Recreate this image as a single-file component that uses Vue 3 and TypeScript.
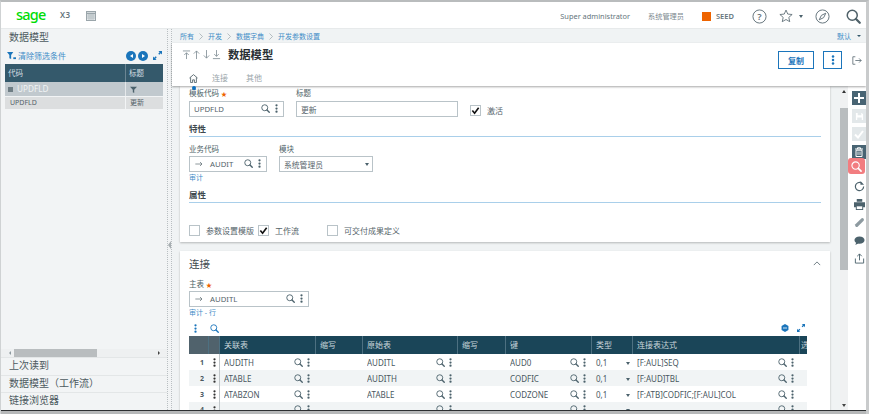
<script setup lang="ts">
const columns: { label: string; width: number }[] = [
  { label: '', width: 20 },
  { label: '', width: 11 },
  { label: '关联表', width: 96 },
  { label: '缩写', width: 47 },
  { label: '原始表', width: 95 },
  { label: '缩写', width: 48 },
  { label: '键', width: 86 },
  { label: '类型', width: 41 },
  { label: '连接表达式', width: 167 },
  { label: '选', width: 7 },
]
const rows = [
  { n: '1', a: 'AUDITH', b: 'AUDITL', k: 'AUD0', t: '0,1', e: '[F:AUL]SEQ' },
  { n: '2', a: 'ATABLE', b: 'AUDITH', k: 'CODFIC', t: '0,1', e: '[F:AUD]TBL' },
  { n: '3', a: 'ATABZON', b: 'ATABLE', k: 'CODZONE', t: '0,1', e: '[F:ATB]CODFIC;[F:AUL]COL' },
  { n: '4', a: '', b: '', k: '', t: '', e: '' },
]
const crumbs = ['所有', '开发', '数据字典', '开发参数设置']
const gridColumns = columns.map((c) => c.width + 'px').join(' ')
</script>

<template>
  <div class="frame">
    <svg class="defs" width="0" height="0" aria-hidden="true">
      <symbol id="i-search" viewBox="0 0 12 12">
        <circle cx="5" cy="5" r="4" fill="none" stroke="currentColor" stroke-width="1.200" />
        <path d="M8 8l3 3" stroke="currentColor" stroke-width="1.800" stroke-linecap="round" />
      </symbol>
      <symbol id="i-dots" viewBox="0 0 4 12">
        <circle cx="2" cy="1.800" r="1.500" fill="currentColor" />
        <circle cx="2" cy="6" r="1.500" fill="currentColor" />
        <circle cx="2" cy="10.200" r="1.500" fill="currentColor" />
      </symbol>
      <symbol id="i-expand" viewBox="0 0 10 10">
        <path d="M6 0h4v4L8.600 2.600 7 4.200 5.800 3 7.400 1.400zM4 10H0V6l1.400 1.400L3 5.800 4.200 7 2.600 8.600z" fill="currentColor" />
      </symbol>
      <symbol id="i-arrow" viewBox="0 0 12 8">
        <path d="M0.500 4h10M7.500 1l3 3-3 3" fill="none" stroke="currentColor" stroke-width="1" />
      </symbol>
    </svg>

    <header class="topbar">
      <div class="brand">sage</div>
      <div class="product">X3</div>
      <svg class="calendar" viewBox="0 0 10 10" width="10" height="10">
        <rect x="0.500" y="0.500" width="9" height="9" fill="#e4e8ea" stroke="#9aa5aa" />
        <path d="M0 2.500h10" stroke="#9aa5aa" stroke-width="1.500" />
        <path d="M3 3v7M5 3v7M7 3v7M0 5h10M0 7h10" stroke="#9aa5aa" stroke-width="0.500" />
      </svg>
      <div class="top-right">
        <span class="user">Super administrator</span>
        <span class="role">系统管理员</span>
        <span class="seed-box"></span>
        <span class="seed">SEED</span>
        <svg class="t-help" viewBox="0 0 16 16" width="15" height="15">
          <circle cx="8" cy="8" r="7" fill="none" stroke="#5f6f77" stroke-width="1" />
          <text x="8" y="11.600" text-anchor="middle" class="help-q">?</text>
        </svg>
        <svg class="t-star" viewBox="0 0 16 16" width="14" height="14">
          <path d="M8 1.200l2 4.600 5 .5-3.800 3.300 1.100 4.900L8 12l-4.300 2.500 1.100-4.900L1 6.300l5-.5z" fill="none" stroke="#5f6f77" stroke-width="1" />
        </svg>
        <span class="t-caret"></span>
        <svg class="t-compass" viewBox="0 0 16 16" width="15" height="15">
          <circle cx="8" cy="8" r="7" fill="none" stroke="#5f6f77" stroke-width="1" />
          <path d="M11.500 4.500L9.200 9.200 4.500 11.500 6.800 6.800z" fill="none" stroke="#5f6f77" stroke-width="1" />
        </svg>
        <svg class="t-search" width="15" height="15"><use href="#i-search" /></svg>
      </div>
    </header>

    <div class="body">
      <aside class="left">
        <div class="left-title">数据模型</div>
        <div class="filter-row">
          <svg class="funnel" viewBox="0 0 10 10" width="9" height="9">
            <path d="M0 1h7L4.600 4.500V9L2.600 8V4.500z" fill="#1b75bb" />
            <path d="M7 7h3v2H7z" fill="#1b75bb" />
          </svg>
          <span class="filter-link">清除筛选条件</span>
          <span class="nav-btn"><i class="tri-l"></i></span>
          <span class="nav-btn"><i class="tri-r"></i></span>
          <svg class="expand" width="9" height="9"><use href="#i-expand" /></svg>
        </div>
        <div class="left-table">
          <div class="left-head">
            <span class="lh-a">代码</span><span class="lh-b">标题</span>
          </div>
          <div class="left-filter">
            <span class="lf-a"><i class="lf-icon"></i>UPDFLD</span>
            <span class="lf-b">
              <svg viewBox="0 0 10 10" width="7" height="7"><path d="M0 1h10L6 5.500V10L4 9V5.500z" fill="#4c626c" /></svg>
            </span>
          </div>
          <div class="left-row">
            <span class="lr-a">UPDFLD</span><span class="lr-b">更新</span>
          </div>
        </div>
        <div class="left-spacer"></div>
        <div class="left-scroll">
          <i class="ls-l"></i>
          <span class="ls-track"><span class="ls-thumb"></span></span>
          <i class="ls-r"></i>
        </div>
        <div class="left-link">上次读到</div>
        <div class="left-link">数据模型（工作流）</div>
        <div class="left-link">链接浏览器</div>
      </aside>

      <div class="splitter"><i class="split-tri"></i></div>

      <main class="right">
        <div class="crumbs">
          <template v-for="(c, i) in crumbs" :key="c">
            <svg v-if="i > 0" class="crumb-sep" viewBox="0 0 4 7" width="4" height="7"><path d="M.5.5l3 3-3 3" fill="none" stroke="#99a5aa" stroke-width="0.700" /></svg>
            <span class="crumb">{{ c }}</span>
          </template>
          <span class="default-view">默认</span>
          <i class="default-caret"></i>
        </div>

        <div class="title-panel">
          <div class="title-row">
            <div class="arrows">
              <svg v-for="d in ['M1 1h8M5 10V3M2.500 5.500L5 3l2.500 2.500', 'M5 10V1M2 4l3-3 3 3', 'M5 0v9M2 6l3 3 3-3', 'M5 0v7M2.500 4.500L5 7l2.500-2.500M1 9.500h8']" :key="d" viewBox="0 0 10 11" width="9" height="10">
                <path :d="d" fill="none" stroke="#7d8b92" stroke-width="0.900" />
              </svg>
            </div>
            <h1 class="page-title">数据模型</h1>
            <div class="title-actions">
              <button class="btn-copy">复制</button>
              <button class="btn-more"><svg width="4" height="10"><use href="#i-dots" /></svg></button>
              <svg class="exit" viewBox="0 0 12 10" width="10" height="9">
                <path d="M4 .5H1v9h3M4 5h7M8.500 2.500L11 5 8.500 7.500" fill="none" stroke="#5f6f77" stroke-width="1" />
              </svg>
            </div>
          </div>
          <nav class="tabs">
            <span class="tab tab-home">
              <svg viewBox="0 0 10 10" width="9" height="9">
                <path d="M.5 4.500L5 .7l4.500 3.800M1.800 3.800v5.700h2.200V6.500h2v3h2.200V3.800" fill="none" stroke="#46585f" stroke-width="0.900" />
              </svg>
              <i class="tab-dot"></i>
            </span>
            <span class="tab">连接</span>
            <span class="tab">其他</span>
          </nav>
        </div>

        <div class="work">
          <div class="scroller">
            <section class="card card-main">
              <div class="row-top">
                <div class="field">
                  <label class="lbl">模板代码 <b class="req">★</b></label>
                  <div class="input w-code">
                    <span class="val">UPDFLD</span>
                    <svg class="ic-s"><use href="#i-search" /></svg>
                    <svg class="ic-d"><use href="#i-dots" /></svg>
                  </div>
                </div>
                <div class="field">
                  <label class="lbl">标题</label>
                  <div class="input w-title"><span class="val">更新</span></div>
                </div>
                <div class="check-top">
                  <span class="cb cb-on"><svg viewBox="0 0 10 10"><path d="M1.500 5l2.500 3 4.500-6" fill="none" stroke="#111" stroke-width="1.800" /></svg></span>
                  <span class="cb-label">激活</span>
                </div>
              </div>

              <div class="section-head">特性</div>
              <div class="row-fields">
                <div class="field">
                  <label class="lbl">业务代码</label>
                  <div class="input w-biz">
                    <svg class="ic-a"><use href="#i-arrow" /></svg>
                    <span class="val val-link">AUDIT</span>
                    <svg class="ic-s"><use href="#i-search" /></svg>
                    <svg class="ic-d"><use href="#i-dots" /></svg>
                  </div>
                  <span class="sub-link">审计</span>
                </div>
                <div class="field">
                  <label class="lbl">模块</label>
                  <div class="input w-mod">
                    <span class="val">系统管理员</span>
                    <i class="sel-caret"></i>
                  </div>
                </div>
              </div>

              <div class="section-head sh2">属性</div>
              <div class="checks">
                <span class="cb"></span><span class="cb-label c1">参数设置模版</span>
                <span class="cb cb-on"><svg viewBox="0 0 10 10"><path d="M1.500 5l2.500 3 4.500-6" fill="none" stroke="#111" stroke-width="1.800" /></svg></span><span class="cb-label c2">工作流</span>
                <span class="cb"></span><span class="cb-label">可交付成果定义</span>
              </div>
            </section>

            <section class="card card-join">
              <div class="join-head">
                <h2 class="join-title">连接</h2>
                <svg viewBox="0 0 10 6" width="8" height="5"><path d="M1 5l4-4 4 4" fill="none" stroke="#5f6f77" stroke-width="1.100" /></svg>
              </div>
              <label class="lbl">主表 <b class="req">★</b></label>
              <div class="input w-main">
                <svg class="ic-a"><use href="#i-arrow" /></svg>
                <span class="val val-link">AUDITL</span>
                <svg class="ic-s"><use href="#i-search" /></svg>
                <svg class="ic-d"><use href="#i-dots" /></svg>
              </div>
              <span class="sub-link">审计 - 行</span>

              <div class="tbl-tools">
                <svg class="tool-d"><use href="#i-dots" /></svg>
                <svg class="tool-s"><use href="#i-search" /></svg>
                <span class="tool-gap"></span>
                <svg class="tool-hex" viewBox="0 0 10 10"><path d="M5 0l4.300 2.500v5L5 10 .7 7.500v-5z" fill="#1b75bb" /><path d="M2.500 5h5" stroke="#fff" stroke-width="1" /></svg>
                <svg class="tool-e"><use href="#i-expand" /></svg>
              </div>

              <div class="tbl">
                <div class="tr thead" :style="{ gridTemplateColumns: gridColumns }">
                  <span v-for="(c, i) in columns" :key="i" class="th" :class="{ 'th-gray': i < 2 }">{{ c.label }}</span>
                </div>
                <div v-for="(r, i) in rows" :key="r.n" class="tr" :class="{ alt: i % 2 === 1 }" :style="{ gridTemplateColumns: gridColumns }">
                  <span class="td td-n">{{ r.n }}</span>
                  <span class="td td-m"><svg class="ic-d"><use href="#i-dots" /></svg></span>
                  <span class="td td-i"><span>{{ r.a }}</span><svg class="ic-s"><use href="#i-search" /></svg><svg class="ic-d"><use href="#i-dots" /></svg></span>
                  <span class="td"></span>
                  <span class="td td-i"><span>{{ r.b }}</span><svg class="ic-s"><use href="#i-search" /></svg><svg class="ic-d"><use href="#i-dots" /></svg></span>
                  <span class="td"></span>
                  <span class="td td-i"><span>{{ r.k }}</span><svg class="ic-s"><use href="#i-search" /></svg><svg class="ic-d"><use href="#i-dots" /></svg></span>
                  <span class="td td-t"><span>{{ r.t }}</span><i class="sel-caret"></i></span>
                  <span class="td td-i"><span>{{ r.e }}</span><svg class="ic-s"><use href="#i-search" /></svg><svg class="ic-d"><use href="#i-dots" /></svg></span>
                  <span class="td"></span>
                </div>
              </div>
            </section>
          </div>

          <div class="vscroll">
            <i class="vs-up"></i>
            <span class="vs-thumb"></span>
            <span class="vs-fill"></span>
            <i class="vs-down"></i>
          </div>

          <div class="rail">
            <span class="r-btn r-dark"><svg viewBox="0 0 10 10" width="10" height="10"><path d="M5 0v10M0 5h10" stroke="#fff" stroke-width="2" /></svg></span>
            <span class="r-btn r-off"><svg viewBox="0 0 10 10" width="9" height="9"><path d="M1 1h6.500L9 2.500V9H1z" fill="#fff" /><path d="M3 1h4v2.500H3zM2.500 6h5v3h-5z" fill="#e4e9eb" /></svg></span>
            <span class="r-btn r-off"><svg viewBox="0 0 10 10" width="10" height="10"><path d="M1 5.500L4 8.500 9 2" fill="none" stroke="#fff" stroke-width="2" /></svg></span>
            <span class="r-btn r-dark"><svg viewBox="0 0 10 10" width="10" height="10"><path d="M1 2h8M3.500 2V.8h3V2M2 3.200h6V9.500H2z" fill="none" stroke="#fff" stroke-width="1" /><path d="M4 4.500v3.500M6 4.500v3.500" stroke="#fff" stroke-width="0.800" /></svg></span>
            <span class="r-find"><svg viewBox="0 0 12 12" width="11" height="11" class="find-svg"><use href="#i-search" /></svg></span>
            <svg class="r-ic r-first" viewBox="0 0 12 12" width="11" height="11"><path d="M10.500 6A4.500 4.500 0 1 1 8 2" fill="none" stroke="#4c626c" stroke-width="1.300" /><path d="M7 0v4h4z" fill="#4c626c" /></svg>
            <svg class="r-ic" viewBox="0 0 12 12" width="11" height="11"><path d="M3 0h6v3H3zM0 3.500h12V9H10v3H2V9H0z" fill="#4c626c" /><path d="M3 8h6v3H3z" fill="#fff" /></svg>
            <svg class="r-ic" viewBox="0 0 12 12" width="11" height="11"><path d="M1.500 8L8 1.500a1.800 1.800 0 0 1 2.500 2.500L4 10.500A1.800 1.800 0 0 1 1.500 8z" fill="#8d9aa0" /></svg>
            <svg class="r-ic" viewBox="0 0 12 12" width="11" height="11"><ellipse cx="6" cy="5.500" rx="5.500" ry="4" fill="#4c626c" /><path d="M2.500 8L1.500 11 5 9z" fill="#4c626c" /></svg>
            <svg class="r-ic" viewBox="0 0 12 12" width="11" height="11"><path d="M1.500 6v5h9V6M6 8V1M3.500 3.500L6 1l2.500 2.500" fill="none" stroke="#4c626c" stroke-width="1" /></svg>
          </div>
        </div>
      </main>
    </div>
    <div class="bottom-edge"></div>
  </div>
</template>

<style>
html, body { margin: 0; padding: 0; background: #fff; overflow: hidden; }
</style>

<style scoped>
.frame {
  width: 869px; height: 414px; box-sizing: border-box; overflow: hidden;
  display: flex; flex-direction: column; position: relative;
  border-top: 2px solid #b9bcbd; border-left: 1px solid #cfd2d3; border-right: 3px solid #c9cbcc;
  font-family: "Noto Sans", "Noto Sans CJK SC", sans-serif; color: #4d5f67; background: #fff;
}
.defs { position: absolute; }
svg { display: block; flex: none; }
i { display: block; flex: none; }

.topbar { height: 26px; display: flex; align-items: center; flex: none; background: #fff; padding-top: 1px; box-sizing: border-box; }
.brand { margin-left: 15px; width: 36px; color: #00dc06; font: 500 14.500px/14px "Noto Sans", sans-serif; letter-spacing: -0.800px; margin-top: -3px; }
.product { margin-left: 8px; font-size: 8px; font-weight: 600; color: #65757c; letter-spacing: 0.300px; margin-top: -2px; }
.calendar { margin-left: 16px; }
.top-right { margin-left: auto; display: flex; align-items: center; height: 100%; padding-top: 1px; box-sizing: border-box; }
.user { font-size: 7.400px; color: #65757c; margin-right: 18px; }
.role { font-size: 7.200px; color: #7b888e; margin-right: 18px; }
.seed-box { width: 9px; height: 9px; background: #ee6400; margin-right: 5px; }
.seed { font-size: 7.500px; color: #65757c; font-weight: 600; margin-right: 18px; }
.help-q { font: 600 10px "Noto Sans", sans-serif; fill: #5f6f77; }
.t-help { margin-right: 12px; }
.t-star { margin-right: 6px; }
.t-caret { width: 0; height: 0; border: 2.500px solid transparent; border-top: 3px solid #4c626c; margin: 3px 12px 0 0; }
.t-compass { margin-right: 16px; }
.t-search { color: #4f6169; margin-right: 5px; }

.body { flex: 1; min-height: 0; display: flex; border-top: 1px solid #e7eaeb; }

.left { width: 166px; flex: none; background: #f2f4f5; display: flex; flex-direction: column; box-sizing: border-box; }
.left-title { font-size: 10px; line-height: 14px; height: 16px; padding: 1px 0 0 8px; color: #4d5a60; flex: none; }
.filter-row { display: flex; align-items: center; height: 17px; margin-top: 1px; padding-left: 6px; padding-right: 5px; flex: none; }
.funnel { margin-right: 2px; }
.filter-link { font-size: 8px; color: #3f8cc7; flex: 1; }
.nav-btn { width: 10px; height: 10px; border-radius: 50%; background: #1b75bb; display: flex; align-items: center; justify-content: center; margin-right: 2px; }
.tri-l { border: 2.500px solid transparent; border-right: 3px solid #fff; border-left: 0; }
.tri-r { border: 2.500px solid transparent; border-left: 3px solid #fff; border-right: 0; }
.expand { color: #1b75bb; margin-left: 3px; }
.left-table { margin: 0 4px; flex: none; }
.left-head { height: 18px; display: flex; background: #34596b; color: #d3dde1; font-size: 7.500px; line-height: 18px; }
.lh-a { width: 121px; padding-left: 3px; box-sizing: border-box; border-right: 1px solid #6b8593; }
.lh-b { padding-left: 3px; }
.left-filter { height: 14px; display: flex; background: #c1c9ce; border-bottom: 1px solid #f2f4f5; color: #f0f3f4; font-size: 8.200px; line-height: 14px; }
.lf-a { width: 121px; display: flex; align-items: center; padding-left: 3px; box-sizing: border-box; border-right: 1px solid #e5e8ea; }
.lf-icon { width: 5px; height: 5px; background: #6e7d84; margin-right: 4px; }
.lf-b { display: flex; align-items: center; padding-left: 4px; }
.left-row { height: 12px; display: flex; background: #dcdedf; font-size: 7px; line-height: 12px; color: #55636a; }
.lr-a { width: 121px; padding-left: 5px; box-sizing: border-box; border-right: 1px solid #f2f4f5; }
.lr-b { padding-left: 4px; }
.left-spacer { flex: 1; }
.left-scroll { height: 8px; display: flex; align-items: center; background: #eef0f1; flex: none; }
.ls-l { border: 2px solid transparent; border-right: 2px solid #8d9aa0; border-left: 0; margin-left: 8px; }
.ls-track { flex: 1; margin-left: 3px; }
.ls-thumb { display: block; width: 83px; height: 8px; background: #b9bdbf; }
.ls-r { border: 2px solid transparent; border-left: 2px solid #444; border-right: 0; margin-right: 7px; }
.left-link { height: 17.670px; line-height: 15px; font-size: 10px; color: #4d5a60; padding-left: 8px; border-top: 1px solid #e3e6e7; flex: none; box-sizing: border-box; }

.splitter { width: 5px; flex: none; background: #f2f4f5; border-left: 1px dotted #b9bfc2; border-right: 1px dotted #b9bfc2; box-sizing: border-box; display: flex; align-items: center; }
.split-tri { border: 4px solid transparent; border-right: 3px solid #a7aeb1; border-left: 0; margin-top: 50px; }

.right { flex: 1; min-width: 0; display: flex; flex-direction: column; background: #f0f3f4; }
.crumbs { height: 14px; flex: none; display: flex; align-items: center; padding-left: 8px; padding-right: 5px; font-size: 7px; }
.crumb { color: #3f8cc7; }
.crumb-sep { margin: 0 5px; }
.default-view { margin-left: auto; color: #3f8cc7; font-size: 7px; }
.default-caret { border: 2px solid transparent; border-top: 2.500px solid #34596b; margin: 2px 0 0 6px; }

.title-panel { height: 43px; flex: none; background: #fff; box-shadow: 0 1px 2px rgba(0,0,0,.35); position: relative; z-index: 2; }
.title-row { height: 24px; display: flex; align-items: center; padding-left: 10px; }
.arrows { display: flex; gap: 1px; }
.page-title { font-size: 11.300px; font-weight: 600; color: #2a3034; margin: 0 0 0 7px; line-height: 14px; }
.title-actions { margin-left: auto; display: flex; align-items: center; margin-right: 4px; margin-top: 10px; }
.btn-copy { width: 36px; height: 18px; border: 1px solid #1b75bb; background: #fff; color: #1b75bb; font: 600 8px "Noto Sans CJK SC", sans-serif; padding: 0; box-sizing: border-box; margin-right: 9px; }
.btn-more { width: 19px; height: 18px; border: 1px solid #1b75bb; background: #fff; color: #1b75bb; padding: 0; display: flex; align-items: center; justify-content: center; box-sizing: border-box; margin-right: 10px; }
.tabs { display: flex; height: 19px; padding: 3px 0 0 17px; box-sizing: border-box; align-items: center; }
.tab { font-size: 8px; color: #9aa5aa; margin-right: 18px; line-height: 14px; }
.tab-home { position: relative; margin-right: 14px; }
.tab-dot { position: absolute; left: 2.500px; top: 12px; width: 4px; height: 4px; border-radius: 50%; background: #0b6fc1; }

.work { flex: 1; min-height: 0; display: flex; }
.scroller { flex: 1; min-width: 0; padding: 0 10px 0 8px; overflow: hidden; }
.card { background: #fff; box-shadow: 0 1px 2px rgba(0,0,0,.25); padding-left: 9px; box-sizing: border-box; }
.card-main { height: 156px; padding-top: 2px; padding-right: 9px; }
.card-join { margin-top: 9px; height: 180px; overflow: hidden; padding-top: 1px; }
.row-top { display: flex; align-items: flex-start; }
.field { display: flex; flex-direction: column; margin-right: 12px; }
.lbl { display: block; font-size: 7.500px; line-height: 11px; color: #4d5f67; height: 11px; }
.req { color: #ee6400; font-weight: 400; font-size: 6px; }
.input { height: 16px; box-sizing: border-box; border: 1px solid #b9c3c8; margin-top: 1px; display: flex; align-items: center; padding-left: 4px; padding-right: 5px; background: #fff; }
.row-top .input { margin-top: 2px; }
.w-code { width: 95px; }
.w-title { width: 162px; }
.w-biz { width: 78px; }
.w-mod { width: 94px; padding-right: 3px; }
.w-main { width: 120px; }
.val { font-size: 7.800px; color: #55636a; flex: 1; }
.val-link { margin-left: 7px; }
.ic-s { width: 9px; height: 9px; color: #4c626c; margin-left: 3px; margin-top: -1px; }
.ic-d { width: 3px; height: 9px; color: #4c626c; margin-left: 5px; margin-top: -1px; }
.ic-a { width: 8px; height: 6px; color: #55636a; margin-left: 1px; }
.check-top { display: flex; align-items: center; margin-top: 17px; }
.cb { width: 11px; height: 11px; border: 1px solid #b9c3c8; box-sizing: border-box; display: flex; align-items: center; justify-content: center; flex: none; }
.cb svg { width: 9px; height: 9px; }
.cb-label { font-size: 8px; margin-left: 6px; color: #55636a; }
.section-head { font-size: 8.500px; font-weight: 600; color: #40494e; line-height: 11px; margin-top: 6px; padding-bottom: 2px; border-bottom: 1px solid #a9cfea; height: 11px; }
.sh2 { margin-top: 6px; }
.row-fields { display: flex; margin-top: 7px; }
.sub-link { display: block; font-size: 7px; line-height: 10px; color: #3f8cc7; margin-top: 1px; }
.sel-caret { border: 2.500px solid transparent; border-top: 3px solid #4c626c; margin: 3px 0 0 auto; }
.checks { display: flex; align-items: center; margin-top: 22px; }
.c1 { margin-right: 4px; }
.c2 { margin-right: 28px; }

.join-head { display: flex; align-items: center; justify-content: space-between; height: 20px; margin-top: 1px; padding-right: 9px; }
.join-title { font-size: 10.500px; font-weight: 400; color: #40494e; margin: 0; }
.card-join > .lbl { margin-top: 6px; }
.tbl-tools { display: flex; align-items: center; height: 12px; margin-top: 4px; margin-right: 25px; }
.tool-d { width: 3px; height: 9px; color: #1b75bb; margin-left: 5px; }
.tool-s { width: 9px; height: 9px; color: #1b75bb; margin-left: 13px; }
.tool-gap { flex: 1; }
.tool-hex { width: 8px; height: 8px; margin-right: 8px; }
.tool-e { width: 8px; height: 8px; color: #1b75bb; }
.tbl { width: 618px; margin-top: 2px; overflow: hidden; }
.tr { display: grid; height: 16px; font-size: 8px; line-height: 16px; color: #4a585f; }
.thead { height: 18px; background: #1a4558; color: #c9d6db; line-height: 18px; }
.th { padding-left: 4px; border-right: 1px solid #4d7081; box-sizing: border-box; overflow: hidden; white-space: nowrap; }
.th:last-child { border-right: 0; padding-left: 1px; }
.th-gray { background: #50626c; }
.alt { background: #f1f4f5; }
.td { display: flex; align-items: center; min-width: 0; box-sizing: border-box; padding-left: 4px; }
.td-n { justify-content: flex-end; font-weight: 700; font-size: 7px; padding: 0 5px 0 0; }
.td-m { padding: 0; border-right: 1px solid #c1c7ca; justify-content: center; }
.td-m .ic-d { margin: 0; color: #333; }
.td-i > span { flex: 1; white-space: nowrap; overflow: hidden; padding-top: 1px; }
.td-i .ic-d { margin-left: 4px; margin-right: 6px; }
.td-t > span { flex: 1; padding-top: 1px; }
.td-t .sel-caret { margin-right: 3px; }

.vscroll { width: 8px; flex: none; background: #f0f1f2; display: flex; flex-direction: column; align-items: center; }
.vs-up { border: 2px solid transparent; border-bottom: 3px solid #333; border-top: 0; margin: 4px 0 15px; }
.vs-thumb { width: 100%; height: 162px; background: #b9bdbf; display: block; }
.vs-fill { flex: 1; }
.vs-down { border: 2px solid transparent; border-top: 3px solid #444; border-bottom: 0; margin-bottom: 3px; }

.rail { width: 18px; flex: none; box-sizing: border-box; background: #fff; display: flex; flex-direction: column; align-items: center; padding: 5px 0 0 4px; position: relative; }
.r-btn { width: 14px; height: 14px; display: flex; align-items: center; justify-content: center; margin-bottom: 4px; flex: none; }
.r-dark { background: #486473; }
.r-off { background: #e3e8ea; }
.r-find { position: absolute; top: 72px; left: 0; width: 17px; height: 16px; border-radius: 3px; background: #f27d80; color: #fff; display: flex; align-items: center; justify-content: center; }
.find-svg { color: #fff; }
.r-ic { margin-bottom: 7px; }
.r-first { margin-top: 18px; }

.bottom-edge { height: 4px; flex: none; background: #b6b8b9; border-top: 1px solid #2d3032; box-sizing: border-box; }
</style>
